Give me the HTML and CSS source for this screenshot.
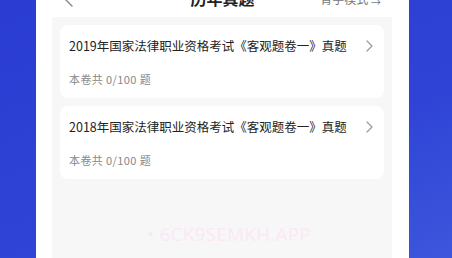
FILE: index.html
```html
<!DOCTYPE html>
<html lang="zh">
<head>
<meta charset="utf-8">
<link rel="stylesheet" href="styles.css">
</head>
<body>
<div class="panel">
  <div class="header">
    <div class="back">
      <svg width="12" height="18" viewBox="0 0 12 18"><path d="M10 1 L2 9 L10 17" fill="none" stroke="#888" stroke-width="1.4" stroke-linecap="round" stroke-linejoin="round"/></svg>
    </div>
    <div class="title">历年真题</div>
    <div class="mode">背学模式 <span class="mode-icon">⇆</span></div>
  </div>
  <div class="content">
    <div class="card">
      <div class="card-text">
        <div class="card-title">2019年国家法律职业资格考试《客观题卷一》真题</div>
        <div class="card-sub">本卷共 0/100 题</div>
      </div>
      <svg class="arrow" width="7" height="12" viewBox="0 0 7 12"><path d="M1 1 L6 6 L1 11" fill="none" stroke="#999" stroke-width="1.2" stroke-linecap="round" stroke-linejoin="round"/></svg>
    </div>
    <div class="card">
      <div class="card-text">
        <div class="card-title">2018年国家法律职业资格考试《客观题卷一》真题</div>
        <div class="card-sub">本卷共 0/100 题</div>
      </div>
      <svg class="arrow" width="7" height="12" viewBox="0 0 7 12"><path d="M1 1 L6 6 L1 11" fill="none" stroke="#999" stroke-width="1.2" stroke-linecap="round" stroke-linejoin="round"/></svg>
    </div>
  </div>
  <div class="watermark">• 6CK9SEMKH.APP</div>
</div>
</body>
</html>
```
FILE: styles.css
```css
html, body {
  margin: 0;
  padding: 0;
  height: 258px;
  overflow: hidden;
}
body {
  background: linear-gradient(160deg, #2a3cd2 0%, #2f44d6 60%, #3d56dc 100%);
  font-family: "Noto Sans CJK SC", "Noto Sans", sans-serif;
}
.panel {
  position: relative;
  margin-left: 36px;
  margin-top: -17px;
  width: 373px;
  height: 275px;
  background: #fff;
  display: flex;
  flex-direction: column;
}
.header {
  height: 34px;
  padding-bottom: 4px;
  box-sizing: border-box;
  display: grid;
  grid-template-columns: 1fr auto 1fr;
  align-items: center;
}
.back {
  padding-left: 26px;
  display: flex;
  align-items: center;
}
.title {
  font-size: 16px;
  font-weight: bold;
  color: #222;
  line-height: 20px;
}
.mode {
  justify-self: end;
  padding-right: 28px;
  font-size: 12px;
  color: #777;
  line-height: 18px;
  padding-top: 2px;
}
.mode-icon {
  font-size: 10px;
}
.content {
  flex: 1;
  margin: 0 17px 0 16px;
  background: #f7f7f7;
  padding: 8px;
  display: flex;
  flex-direction: column;
  gap: 8px;
}
.card {
  height: 73px;
  background: #fff;
  border-radius: 8px;
  display: flex;
  align-items: flex-start;
  padding: 11px 11px 0 9px;
  box-sizing: border-box;
}
.card-text {
  flex: 1;
}
.card-title {
  font-size: 12.5px;
  line-height: 20px;
  color: #222;
}
.card-sub {
  margin-top: 15px;
  font-size: 11px;
  line-height: 16px;
  color: #888;
  letter-spacing: 0.4px;
}
.arrow {
  margin-top: 4px;
}
.watermark {
  position: absolute;
  left: 111px;
  top: 239px;
  font-family: "Open Sans", "Noto Sans", sans-serif;
  font-size: 19px;
  line-height: 24px;
  color: #fbe8f6;
  letter-spacing: 0.2px;
}
```
